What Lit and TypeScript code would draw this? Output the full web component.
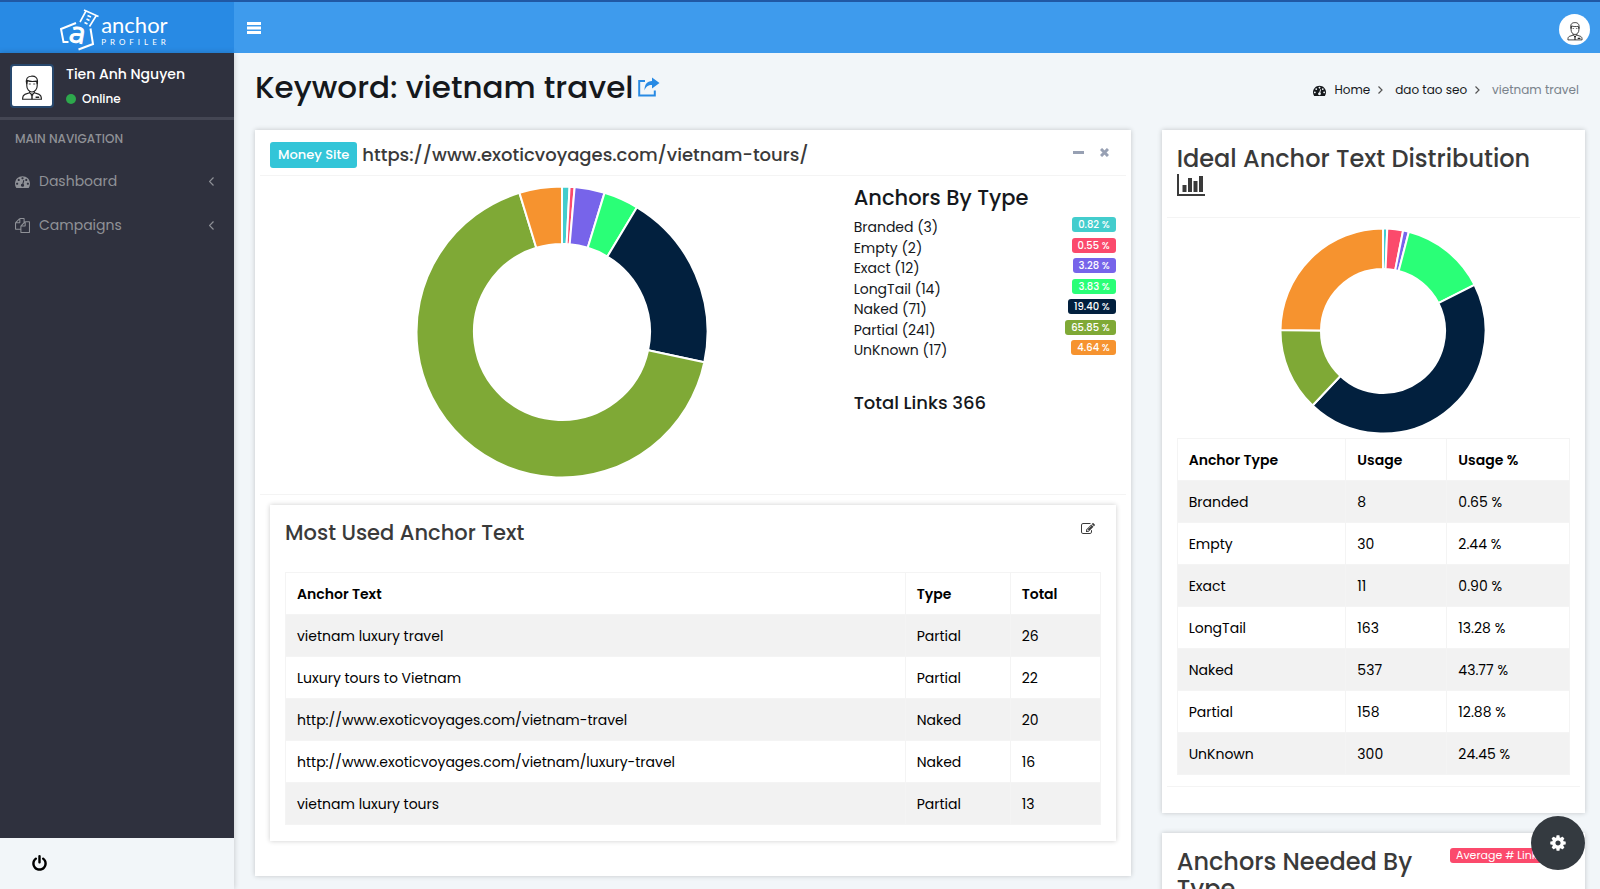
import { LitElement, html, svg, css } from "lit";
import { customElement, property } from "lit/decorators.js";

type Slice = { label: string; value: number; percent: string; color: string };

const COLORS = {
  branded: "#43cdcd",
  empty: "#fb4a6c",
  exact: "#7764ea",
  longTail: "#2aff77",
  naked: "#02203e",
  partial: "#7fa936",
  unknown: "#f6932f",
};

const CURRENT: Slice[] = [
  { label: "Branded", value: 3, percent: "0.82 %", color: COLORS.branded },
  { label: "Empty", value: 2, percent: "0.55 %", color: COLORS.empty },
  { label: "Exact", value: 12, percent: "3.28 %", color: COLORS.exact },
  { label: "LongTail", value: 14, percent: "3.83 %", color: COLORS.longTail },
  { label: "Naked", value: 71, percent: "19.40 %", color: COLORS.naked },
  { label: "Partial", value: 241, percent: "65.85 %", color: COLORS.partial },
  { label: "UnKnown", value: 17, percent: "4.64 %", color: COLORS.unknown },
];

const IDEAL: Slice[] = [
  { label: "Branded", value: 8, percent: "0.65 %", color: COLORS.branded },
  { label: "Empty", value: 30, percent: "2.44 %", color: COLORS.empty },
  { label: "Exact", value: 11, percent: "0.90 %", color: COLORS.exact },
  { label: "LongTail", value: 163, percent: "13.28 %", color: COLORS.longTail },
  { label: "Naked", value: 537, percent: "43.77 %", color: COLORS.naked },
  { label: "Partial", value: 158, percent: "12.88 %", color: COLORS.partial },
  { label: "UnKnown", value: 300, percent: "24.45 %", color: COLORS.unknown },
];

const ANCHORS: [string, string, number][] = [
  ["vietnam luxury travel", "Partial", 26],
  ["Luxury tours to Vietnam", "Partial", 22],
  ["http://www.exoticvoyages.com/vietnam-travel", "Naked", 20],
  ["http://www.exoticvoyages.com/vietnam/luxury-travel", "Naked", 16],
  ["vietnam luxury tours", "Partial", 13],
];

const ICONS: Record<string, string> = {
  gauge:
    "M384 1152q0-53-37.5-90.5t-90.5-37.5-90.5 37.5-37.5 90.5 37.5 90.5 90.5 37.5 90.5-37.5 37.5-90.5zm192-448q0-53-37.5-90.5t-90.5-37.5-90.5 37.5-37.5 90.5 37.5 90.5 90.5 37.5 90.5-37.5 37.5-90.5zm428 481l101-382q6-26-7.5-48.5t-38.5-29.5-48 6.5-30 39.5l-101 382q-60 5-107 43.5t-63 98.5q-20 77 20 146t117 89 146-20 89-117q16-60-6-117t-72-91zm660-33q0-53-37.5-90.5t-90.5-37.5-90.5 37.5-37.5 90.5 37.5 90.5 90.5 37.5 90.5-37.5 37.5-90.5zm-640-640q0-53-37.5-90.5t-90.5-37.5-90.5 37.5-37.5 90.5 37.5 90.5 90.5 37.5 90.5-37.5 37.5-90.5zm448 192q0-53-37.5-90.5t-90.5-37.5-90.5 37.5-37.5 90.5 37.5 90.5 90.5 37.5 90.5-37.5 37.5-90.5zm320 448q0 261-141 483-19 29-54 29h-1402q-35 0-54-29-141-221-141-483 0-182 71-348t191-286 286-191 348-71 348 71 286 191 191 286 71 348z",
  files:
    "M1696 384q40 0 68 28t28 68v1216q0 40-28 68t-68 28h-960q-40 0-68-28t-28-68v-288h-544q-40 0-68-28t-28-68v-672q0-40 20-88t48-76l408-408q28-28 76-48t88-20h416q40 0 68 28t28 68v328q68-40 128-40h416zm-544 213l-299 299h299v-299zm-640-384l-299 299h299v-299zm196 647l316-316v-416h-384v416q0 40-28 68t-68 28h-416v640h512v-256q0-40 20-88t48-76zm956 804v-1152h-384v416q0 40-28 68t-68 28h-416v640h896z",
  cog: "M1152 896q0-106-75-181t-181-75-181 75-75 181 75 181 181 75 181-75 75-181zm512-109v222q0 12-8 23t-20 13l-185 28q-19 54-39 91 35 50 107 138 10 12 10 25t-9 23q-27 37-99 108t-94 71q-12 0-26-9l-138-108q-44 23-91 38-16 136-29 186-7 28-36 28h-222q-14 0-24.5-8.5t-11.5-21.5l-28-184q-49-16-90-37l-141 107q-10 9-25 9-14 0-25-11-126-114-165-168-7-10-7-23 0-12 8-23 15-21 51-66.5t54-70.5q-27-50-41-99l-183-27q-13-2-21-12.5t-8-23.5v-222q0-12 8-23t19-13l186-28q14-46 39-92-40-57-107-138-10-12-10-24 0-10 9-23 26-36 98.5-107.5t94.5-71.5q13 0 26 10l138 107q44-23 91-38 16-136 29-186 7-28 36-28h222q14 0 24.5 8.5t11.5 21.5l28 184q49 16 90 37l142-107q9-9 24-9 13 0 25 10 129 119 165 170 7 8 7 22 0 12-8 23-15 21-51 66.5t-54 70.5q26 50 41 98l183 28q13 2 21 12.5t8 23.5z",
  power:
    "M1664 896q0 156-61 298t-164 245-245 164-298 61-298-61-245-164-164-245-61-298q0-182 80.5-343t226.5-270q43-32 95.5-25t83.5 50q32 42 24.5 94.5t-49.5 84.5q-98 74-151.5 181t-53.5 228q0 104 40.5 198.5t109.5 163.5 163.5 109.5 198.5 40.5 198.5-40.5 163.5-109.5 109.5-163.5 40.5-198.5q0-121-53.5-228t-151.5-181q-42-32-49.5-84.5t24.5-94.5q31-43 84-50t95 25q146 109 226.5 270t80.5 343zm-640-768v640q0 52-38 90t-90 38-90-38-38-90v-640q0-52 38-90t90-38 90 38 38 90z",
  edit: "M888 1184l116-116-152-152-116 116v56h96v96h56zm440-720q-16-16-33 1l-350 350q-17 17-1 33t33-1l350-350q17-17 1-33zm80 594v190q0 119-84.5 203.5t-203.5 84.5h-832q-119 0-203.5-84.5t-84.5-203.5v-832q0-119 84.5-203.5t203.5-84.5h832q63 0 117 25 15 7 18 23 3 17-9 29l-49 49q-14 14-32 8-23-6-45-6h-832q-66 0-113 47t-47 113v832q0 66 47 113t113 47h832q66 0 113-47t47-113v-126q0-13 9-22l64-64q15-15 35-7t20 29zm-96-738l288 288-672 672h-288v-288zm444 132l-92 92-288-288 92-92q28-28 68-28t68 28l152 152q28 28 28 68t-28 68z",
};

const icon = (name: string, size: number) => html`<svg
  width=${size}
  height=${size}
  viewBox="0 0 1792 1792"
  fill="currentColor"
  aria-hidden="true"
>
  <path d=${ICONS[name]}></path>
</svg>`;

const avatar = (size: number) => html`<svg
  width=${size}
  height=${size}
  viewBox="0 0 40 40"
  fill="none"
  stroke="#222"
  stroke-width="1.4"
  role="img"
  aria-label="Avatar"
>
  <path d="M13.5 15.5v4.2c0 4.4 3 7.8 6.5 7.8s6.5-3.4 6.5-7.8v-4.2"></path>
  <path d="M13.4 17.5c-1.6-6.6 1-9.5 5.2-9.7 4.6-.8 9.6 1.4 8 9.7l-1-3.6c-3.6.6-8.2.6-11.2-.6z"></path>
  <path d="M16 17.5h2.5M21.5 17.5h2.5" stroke-width="1"></path>
  <path d="M17 26.5v2l3 2.5 3-2.5v-2M17 28.5l-6 2c-2 .8-2.8 2-2.8 6h23.6c0-4-.8-5.2-2.8-6l-6-2"></path>
  <path d="M20 31v5.5M18.5 31h3M24.5 34h4.5" stroke-width="1.8"></path>
</svg>`;

@customElement("donut-chart")
export class DonutChart extends LitElement {
  static styles = css`
    :host {
      display: block;
    }
    svg {
      display: block;
      margin: 0 auto;
    }
  `;

  @property({ attribute: false }) slices: Slice[] = [];
  @property({ type: Number }) size = 200;
  @property({ type: String }) label = "";

  render() {
    const total = this.slices.reduce((sum, s) => sum + s.value, 0);
    const c = this.size / 2;
    const outer = c - 0.5;
    const inner = outer * 0.605;
    const point = (r: number, turn: number) => {
      const a = turn * 2 * Math.PI - Math.PI / 2;
      return `${(c + r * Math.cos(a)).toFixed(2)} ${(c + r * Math.sin(a)).toFixed(2)}`;
    };
    let turn = 0;
    return html`<svg
      width=${this.size}
      height=${this.size}
      viewBox="0 0 ${this.size} ${this.size}"
      role="img"
      aria-label=${this.label}
    >
      ${this.slices.map((s) => {
        const from = turn;
        turn += s.value / total;
        const large = turn - from > 0.5 ? 1 : 0;
        return svg`<path
          fill=${s.color}
          stroke="#fff"
          stroke-width="2"
          d="M${point(outer, from)}A${outer} ${outer} 0 ${large} 1 ${point(outer, turn)}L${point(inner, turn)}A${inner} ${inner} 0 ${large} 0 ${point(inner, from)}Z"
        ></path>`;
      })}
    </svg>`;
  }
}

@customElement("app-root")
export class AppRoot extends LitElement {
  static styles = css`
    :host {
      display: block;
      font-family: Poppins, Inter, "Open Sans", sans-serif;
      font-size: 14px;
      line-height: 20px;
      color: #15181c;
    }
    * {
      box-sizing: border-box;
    }
    h1,
    h2,
    p,
    ul,
    ol {
      margin: 0;
      padding: 0;
      list-style: none;
    }
    h1,
    h2 {
      font-weight: 500;
    }
    a {
      color: inherit;
      text-decoration: none;
    }
    button {
      display: inline-flex;
      align-items: center;
      justify-content: center;
      padding: 0;
      border: 0;
      background: none;
      color: inherit;
      font: inherit;
      cursor: pointer;
    }
    svg {
      display: block;
      flex: none;
    }
    .app {
      display: grid;
      grid-template-columns: 234px minmax(0, 1fr);
      grid-template-rows: 53px minmax(0, 1fr);
      height: 100vh;
      background: #f2f6f9;
    }
    .brand {
      display: flex;
      align-items: center;
      justify-content: center;
      gap: 1px;
      padding: 4px 4px 0 0;
      border-top: 2px solid #2058a4;
      background: #288ae4;
      color: #fff;
      font-family: Lato, "Open Sans", sans-serif;
    }
    .brand-text {
      display: grid;
    }
    .brand-name {
      font-size: 22px;
      line-height: 24px;
    }
    .brand-sub {
      font-size: 8px;
      line-height: 10px;
      letter-spacing: 4px;
    }
    .topbar {
      display: flex;
      align-items: center;
      justify-content: space-between;
      padding: 0 10px 0 13px;
      border-top: 2px solid #2058a4;
      background: #3e9bed;
      color: #fff;
    }
    .avatar-round {
      display: grid;
      place-items: center;
      width: 31px;
      height: 31px;
      margin-top: 4px;
      border-radius: 50%;
      background: #fff;
    }
    .sidebar {
      display: flex;
      flex-direction: column;
      background: #2f313e;
      color: #8f9197;
      box-shadow: 0 0 6px rgba(0, 0, 0, 0.2);
    }
    .user {
      display: flex;
      gap: 12px;
      padding: 11px 10px 9px;
      height: 67px;
      border-bottom: 3px solid #444653;
      color: #fff;
      font-weight: 500;
    }
    .avatar-square {
      display: grid;
      place-items: center;
      width: 44px;
      height: 44px;
      border: 2px solid #28486d;
      border-radius: 4px;
      background: #fff;
    }
    .status {
      display: flex;
      align-items: center;
      gap: 6px;
      padding-top: 5px;
      font-size: 12px;
    }
    .dot {
      width: 10px;
      height: 10px;
      border-radius: 50%;
      background: #2da84c;
    }
    .nav-title {
      padding: 9px 15px 10px;
      font-size: 12px;
      font-weight: 500;
    }
    .nav-link {
      display: flex;
      align-items: center;
      gap: 9px;
      height: 44px;
      padding: 0 20px 0 15px;
    }
    .nav-link span {
      flex: 1;
    }
    .sidebar-footer {
      height: 51px;
      margin-top: auto;
      padding: 0 31px;
      background: #f2f6f9;
      color: #000;
      display: flex;
      align-items: center;
    }
    .content {
      overflow: auto;
      scrollbar-width: none;
      padding: 14px 15px 14px 21px;
    }
    .page-head {
      display: flex;
      align-items: center;
      justify-content: space-between;
      height: 40px;
      margin-bottom: 23px;
      padding-right: 6px;
    }
    .page-title {
      display: flex;
      align-items: center;
      gap: 5px;
      font-size: 31px;
      line-height: 40px;
    }
    .share {
      color: #288ae4;
    }
    .crumbs {
      display: flex;
      align-items: center;
      gap: 12px;
      padding-top: 6px;
      font-size: 12px;
    }
    .crumbs li {
      display: flex;
      align-items: center;
      gap: 8px;
    }
    .crumbs .current {
      color: #7a838c;
    }
    .columns {
      display: grid;
      grid-template-columns: calc((100% + 30px) * 2 / 3 - 31px) minmax(0, 1fr);
      gap: 31px;
      align-items: start;
    }
    .stack {
      display: grid;
      gap: 20px;
    }
    .card {
      background: #fff;
      box-shadow: 0 0 5px rgba(0, 0, 0, 0.2);
    }
    .main-card {
      padding-bottom: 35px;
    }
    .card-head {
      display: flex;
      align-items: center;
      gap: 5px;
      height: 46px;
      margin: 0 5px;
      padding: 5px 14px 0 10px;
      border-bottom: 1px solid #f4f4f4;
      color: #3a3a3a;
    }
    .card-title {
      flex: 1;
      font-size: 18px;
    }
    .site-label {
      padding: 3px 8px;
      border-radius: 3px;
      background: #33c5d8;
      color: #fff;
      font-size: 13px;
      font-weight: 500;
    }
    .tools {
      display: flex;
      gap: 12px;
      color: #97a0b3;
      padding-bottom: 6px;
    }
    .tools button {
      width: 14px;
      height: 14px;
    }
    .overview {
      display: grid;
      grid-template-columns: minmax(0, 1fr) 262px;
      margin: 0 5px;
      padding: 10px 10px 16px;
      border-bottom: 1px solid #f4f4f4;
    }
    .overview h2 {
      padding: 1px 0 8px;
      font-size: 21px;
      line-height: 22px;
    }
    .types {
      display: flex;
      flex-direction: column;
      justify-content: space-between;
      height: 143px;
    }
    .type {
      display: flex;
      align-items: flex-start;
      justify-content: space-between;
    }
    .badge {
      padding: 0 6px;
      border-radius: 3px;
      color: #fff;
      font-size: 10px;
      line-height: 15px;
      font-weight: 500;
    }
    .total {
      padding-top: 33px;
      font-size: 18px;
      font-weight: 500;
    }
    .inner-card {
      margin: 10px 15px 0;
      padding: 16px 15px;
    }
    .inner-head {
      display: flex;
      align-items: flex-start;
      justify-content: space-between;
      height: 51px;
      padding-right: 6px;
      color: #3a3a3a;
    }
    .inner-head h2 {
      font-size: 21px;
      line-height: 24px;
    }
    .inner-head button {
      height: 15px;
    }
    table {
      width: 100%;
      border-collapse: collapse;
      table-layout: fixed;
      color: #000;
    }
    th,
    td {
      height: 42px;
      padding: 0 11px;
      border: 1px solid #f4f4f4;
      text-align: left;
    }
    th {
      font-weight: 600;
    }
    tbody tr:nth-child(odd) {
      background: #f2f2f2;
    }
    .col-type {
      width: 105px;
    }
    .col-total {
      width: 90px;
    }
    .col-name {
      width: 43%;
    }
    .col-usage {
      width: 101px;
    }
    .side-head {
      margin: 0 5px;
      height: 88px;
      padding: 15px 10px 0;
      border-bottom: 1px solid #f4f4f4;
      color: #3a3a3a;
    }
    .side-title {
      font-size: 24px;
      line-height: 27px;
    }
    .side-title svg {
      margin-top: 2px;
    }
    .side-body {
      display: grid;
      gap: 4px;
      margin: 0 5px 26px;
      padding: 10px 10px 11px;
      border-bottom: 1px solid #f4f4f4;
    }
    .side-body donut-chart {
      padding-left: 20px;
    }
    .needed {
      display: flex;
      align-items: flex-start;
      justify-content: space-between;
      gap: 20px;
      padding: 15px;
      color: #3a3a3a;
      min-height: 100px;
    }
    .needed .badge {
      flex: none;
      width: 120px;
      background: #fb4a6c;
      font-size: 11px;
      font-weight: 400;
      white-space: nowrap;
    }
    .fab {
      position: fixed;
      right: 15px;
      bottom: 19px;
      width: 54px;
      height: 54px;
      border-radius: 50%;
      background: #343a40;
      color: #fff;
    }
  `;

  private navItem(name: string, label: string) {
    return html`<li>
      <a class="nav-link" href="#">
        ${icon(name, 15)}<span>${label}</span>
        <svg width="5" height="9" viewBox="0 0 5 9" fill="none" stroke="currentColor" stroke-width="1.2">
          <path d="M4.5 .5l-4 4 4 4"></path>
        </svg>
      </a>
    </li>`;
  }

  private crumbArrow() {
    return html`<svg width="5" height="8" viewBox="0 0 5 8" fill="none" stroke="#555" stroke-width="1.2">
      <path d="M.5 .5l3.5 3.5-3.5 3.5"></path>
    </svg>`;
  }

  render() {
    return html`
      <div class="app">
        <a class="brand" href="#">
          <svg width="40" height="42" viewBox="0 0 40 42" fill="none" stroke="#fff" stroke-width="2">
            <path d="M16 14L1 20l2.500 13h5M30.500 19.500l2.500 15.500-14.500 5.500"></path>
            <path d="M24 1l14.500 6.500M26 2l-6 11M36 7l-6.500 10.500M31 8l-3.500-1.500M29.500 11.500l-3-1.500M27.500 15l-3-1.500" stroke-width="1.6"></path>
            <text x="9" y="34" transform="rotate(10 18 28)" fill="#fff" stroke="#fff" stroke-width="1" font-size="29" font-family="Open Sans, sans-serif">a</text>
          </svg>
          <span class="brand-text">
            <span class="brand-name">anchor</span>
            <span class="brand-sub">PROFILER</span>
          </span>
        </a>

        <header class="topbar">
          <button aria-label="Toggle navigation">
            <svg width="14" height="12" viewBox="0 0 14 12" fill="#fff">
              <rect width="14" height="3"></rect>
              <rect y="4.5" width="14" height="3"></rect>
              <rect y="9" width="14" height="3"></rect>
            </svg>
          </button>
          <a class="avatar-round" href="#">${avatar(24)}</a>
        </header>

        <aside class="sidebar">
          <div class="user">
            <div class="avatar-square">${avatar(32)}</div>
            <div>
              <p>Tien Anh Nguyen</p>
              <p class="status"><span class="dot"></span>Online</p>
            </div>
          </div>
          <nav>
            <p class="nav-title">MAIN NAVIGATION</p>
            <ul>
              ${this.navItem("gauge", "Dashboard")} ${this.navItem("files", "Campaigns")}
            </ul>
          </nav>
          <div class="sidebar-footer">
            <button aria-label="Log out">${icon("power", 17)}</button>
          </div>
        </aside>

        <main class="content">
          <div class="page-head">
            <h1 class="page-title">
              Keyword: vietnam travel
              <a class="share" href="#" aria-label="Open keyword">
                <svg width="22" height="20" viewBox="0 0 22 20">
                  <path d="M7 4H1.200v14.500h15.600v-5" fill="none" stroke="currentColor" stroke-width="2"></path>
                  <path d="M14 .5l7.500 5.500-7.500 5.500v-3.500c-4 0-6 1.500-7.500 5.500 0-6 2.500-9.500 7.500-9.500z" fill="currentColor"></path>
                </svg>
              </a>
            </h1>
            <ol class="crumbs">
              <li>${icon("gauge", 13)}<a href="#">Home</a>${this.crumbArrow()}</li>
              <li><a href="#">dao tao seo</a>${this.crumbArrow()}</li>
              <li class="current">vietnam travel</li>
            </ol>
          </div>

          <div class="columns">
            <section class="card main-card">
              <div class="card-head">
                <span class="site-label">Money Site</span>
                <h2 class="card-title">https://www.exoticvoyages.com/vietnam-tours/</h2>
                <div class="tools">
                  <button aria-label="Collapse">
                    <svg width="11" height="11" viewBox="0 0 11 11" stroke="currentColor" stroke-width="3">
                      <path d="M0 5.500h11"></path>
                    </svg>
                  </button>
                  <button aria-label="Close">
                    <svg width="9" height="9" viewBox="0 0 9 9" stroke="currentColor" stroke-width="3">
                      <path d="M1 1l7 7M8 1l-7 7"></path>
                    </svg>
                  </button>
                </div>
              </div>

              <div class="overview">
                <donut-chart .slices=${CURRENT} size="292" label="Anchors by type"></donut-chart>
                <div>
                  <h2>Anchors By Type</h2>
                  <ul class="types">
                    ${CURRENT.map(
                      (s) => html`<li class="type">
                        ${s.label} (${s.value})
                        <span class="badge" style="background:${s.color}">${s.percent}</span>
                      </li>`
                    )}
                  </ul>
                  <p class="total">Total Links 366</p>
                </div>
              </div>

              <div class="card inner-card">
                <div class="inner-head">
                  <h2>Most Used Anchor Text</h2>
                  <button aria-label="Edit anchors">${icon("edit", 14)}</button>
                </div>
                <table>
                  <thead>
                    <tr>
                      <th>Anchor Text</th>
                      <th class="col-type">Type</th>
                      <th class="col-total">Total</th>
                    </tr>
                  </thead>
                  <tbody>
                    ${ANCHORS.map(
                      ([text, type, total]) => html`<tr>
                        <td>${text}</td>
                        <td>${type}</td>
                        <td>${total}</td>
                      </tr>`
                    )}
                  </tbody>
                </table>
              </div>
            </section>

            <div class="stack">
              <section class="card">
                <div class="side-head">
                  <h2 class="side-title">
                    Ideal Anchor Text Distribution
                    <svg width="28" height="22" viewBox="0 0 28 22" fill="currentColor" aria-hidden="true">
                      <path d="M0 0h2v20h26v2H0zM5.500 11h4v7h-4zM11 4h4v14h-4zM16.500 7h4v11h-4zM22 2h4v16h-4z"></path>
                    </svg>
                  </h2>
                </div>
                <div class="side-body">
                  <donut-chart .slices=${IDEAL} size="206" label="Ideal anchor text distribution"></donut-chart>
                  <table>
                    <thead>
                      <tr>
                        <th class="col-name">Anchor Type</th>
                        <th class="col-usage">Usage</th>
                        <th>Usage %</th>
                      </tr>
                    </thead>
                    <tbody>
                      ${IDEAL.map(
                        (s) => html`<tr>
                          <td>${s.label}</td>
                          <td>${s.value}</td>
                          <td>${s.percent}</td>
                        </tr>`
                      )}
                    </tbody>
                  </table>
                </div>
              </section>

              <section class="card needed">
                <h2 class="side-title">Anchors Needed By Type</h2>
                <span class="badge">Average # Links</span>
              </section>
            </div>
          </div>
        </main>

        <button class="fab" aria-label="Settings">${icon("cog", 18)}</button>
      </div>
    `;
  }
}
